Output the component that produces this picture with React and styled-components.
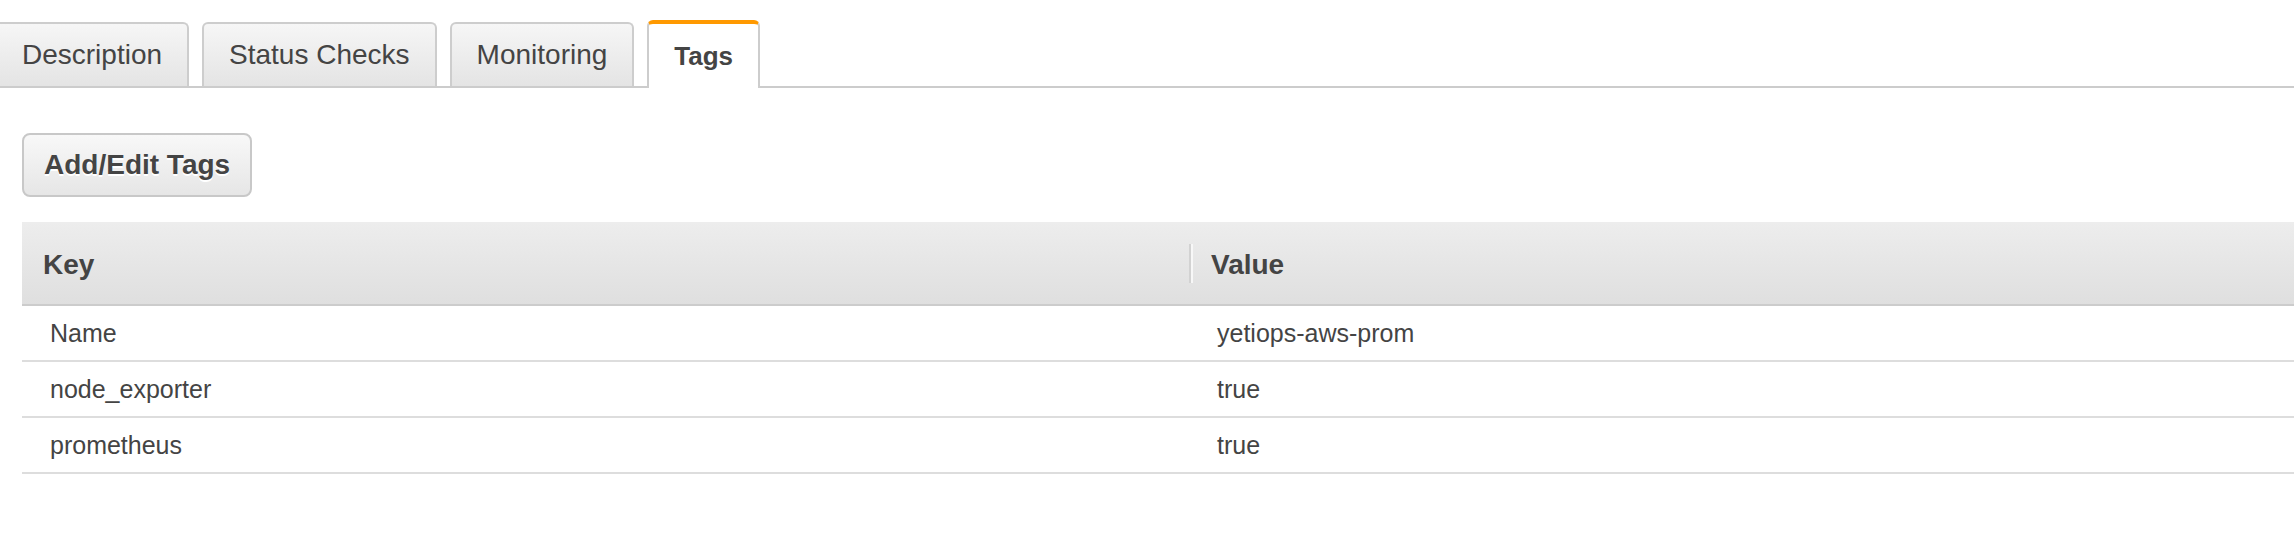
import styled, { createGlobalStyle } from "styled-components";

const tabs = [
  { label: "Description" },
  { label: "Status Checks" },
  { label: "Monitoring" },
  { label: "Tags", active: true },
];

const tags = [
  { key: "Name", value: "yetiops-aws-prom" },
  { key: "node_exporter", value: "true" },
  { key: "prometheus", value: "true" },
];

const App = () => {
  return (
    <>
      <GlobalStyle />
      <Page>
        <TabStrip>
          {tabs.map((tab) => (
            <Tab key={tab.label} $active={tab.active}>
              {tab.label}
            </Tab>
          ))}
        </TabStrip>
        <Content>
          <Button>Add/Edit Tags</Button>
          <Table>
            <HeaderRow>
              <HeaderCell>Key</HeaderCell>
              <HeaderCell>
                <Divider />
                Value
              </HeaderCell>
            </HeaderRow>
            {tags.map((tag) => (
              <Row key={tag.key}>
                <Cell>{tag.key}</Cell>
                <Cell>{tag.value}</Cell>
              </Row>
            ))}
          </Table>
        </Content>
      </Page>
    </>
  );
};

export default App;

const GlobalStyle = createGlobalStyle`
  body {
    margin: 0;
    background: #fff;
    font-family: "Liberation Sans", Arial, sans-serif;
    color: #444;
    overflow: hidden;
  }
`;

const Page = styled.div`
  width: 2294px;
  height: 548px;
  padding-top: 20px;
  box-sizing: border-box;
  overflow: hidden;
`;

const TabStrip = styled.div`
  display: flex;
  align-items: flex-end;
  gap: 13px;
  margin-left: -5px;
  border-bottom: 2px solid #cccccc;
`;

const Tab = styled.div`
  box-sizing: border-box;
  height: ${(p) => (p.$active ? "68px" : "64px")};
  margin-bottom: ${(p) => (p.$active ? "-2px" : "0")};
  padding: 0 25px;
  display: flex;
  align-items: center;
  border: 2px solid #cdcdcd;
  border-bottom: none;
  border-top: ${(p) => (p.$active ? "4px solid #ff9900" : "2px solid #cdcdcd")};
  border-radius: 6px 6px 0 0;
  background: ${(p) =>
    p.$active ? "#ffffff" : "linear-gradient(180deg, #f6f6f6 0%, #e4e4e4 100%)"};
  font-size: ${(p) => (p.$active ? "26px" : "28px")};
  font-weight: ${(p) => (p.$active ? 700 : 400)};
  color: #444;
  white-space: nowrap;
`;

const Content = styled.div`
  padding-left: 22px;
  padding-top: 45px;
  display: flex;
  flex-direction: column;
  align-items: flex-start;
  gap: 25px;
`;

const Button = styled.button`
  box-sizing: border-box;
  height: 64px;
  padding: 0 20px;
  border: 2px solid #c8c8c8;
  border-radius: 8px;
  background: linear-gradient(180deg, #f8f8f8 0%, #e6e6e6 100%);
  font-family: "Liberation Sans", Arial, sans-serif;
  font-size: 28px;
  font-weight: 700;
  color: #444;
  text-shadow: 0 2px 0 #ffffff;
`;

const Table = styled.div`
  width: calc(100% + 22px);
  display: flex;
  flex-direction: column;
`;

const HeaderRow = styled.div`
  box-sizing: border-box;
  height: 84px;
  display: grid;
  grid-template-columns: 1167px 1fr;
  background: linear-gradient(180deg, #ededed 0%, #dfdfdf 100%);
  border-bottom: 2px solid #cccccc;
`;

const HeaderCell = styled.div`
  display: flex;
  align-items: center;
  padding-left: 21px;
  padding-top: 4px;
  font-size: 28px;
  font-weight: 700;
  color: #444;
`;

const Divider = styled.span`
  width: 2px;
  height: 39px;
  margin-left: -21px;
  margin-right: 20px;
  margin-top: -4px;
  background: #d2d2d2;
  box-shadow: 2px 0 0 #f7f7f7;
`;

const Row = styled.div`
  box-sizing: border-box;
  height: 56px;
  display: grid;
  grid-template-columns: 1167px 1fr;
  border-bottom: 2px solid #dddddd;
`;

const Cell = styled.div`
  display: flex;
  align-items: center;
  padding-left: 28px;
  font-size: 25px;
  color: #444;
`;
